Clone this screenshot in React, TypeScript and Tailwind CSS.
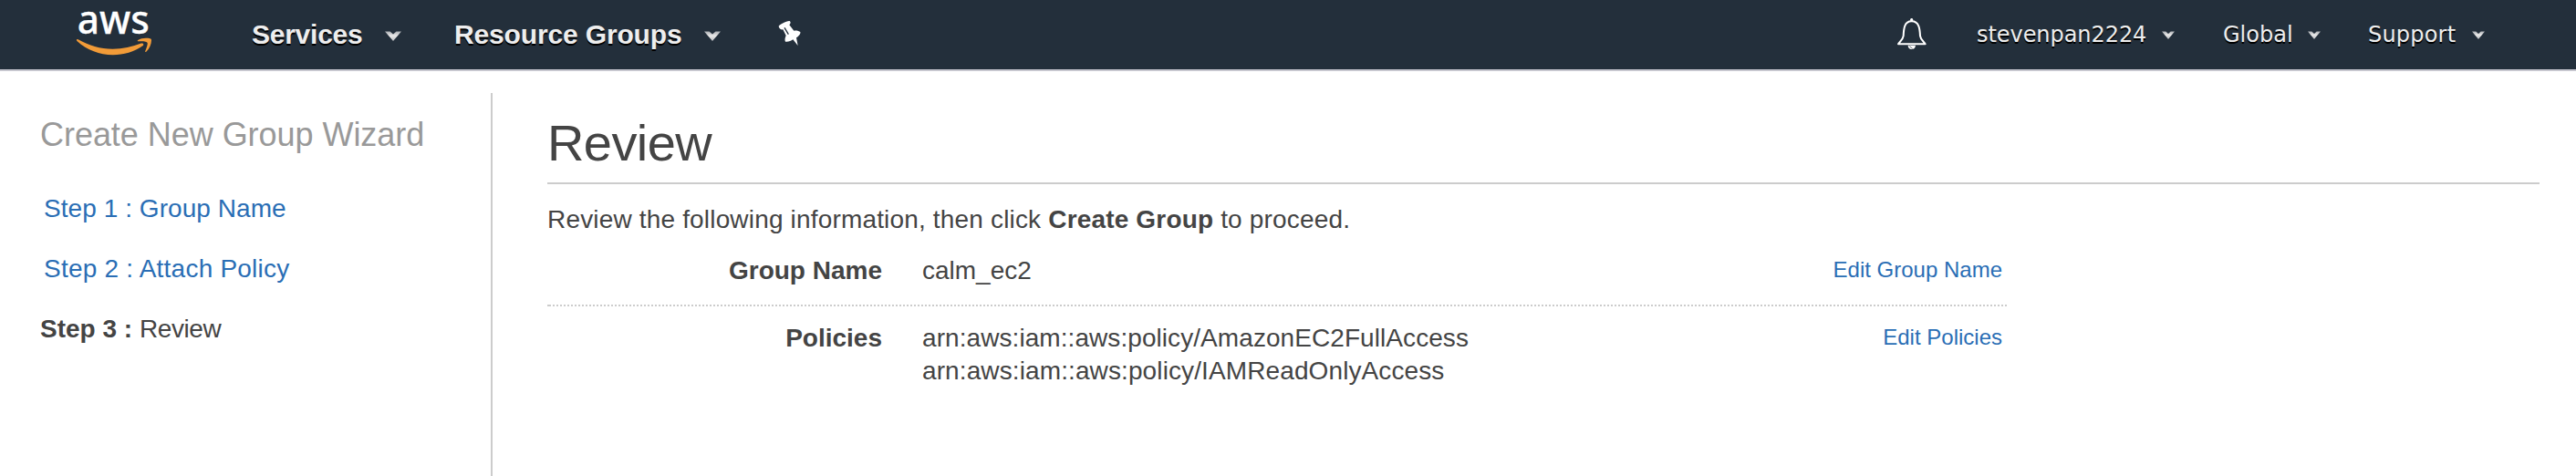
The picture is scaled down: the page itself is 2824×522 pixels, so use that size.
import React from 'react';

function Caret({ large = false }: { large?: boolean }) {
  return (
    <svg
      viewBox="0 0 18 11"
      preserveAspectRatio="none"
      className={large ? 'mt-[2px] h-[11px] w-[18px] shrink-0' : 'h-[9px] w-[14px] shrink-0'}
    >
      <defs>
        <linearGradient id="caret-fill" x1="0" y1="0" x2="0" y2="1">
          <stop offset="0" stopColor="#a9adb2" />
          <stop offset="0.45" stopColor="#e9e9e9" />
          <stop offset="1" stopColor="#b9bcc0" />
        </linearGradient>
      </defs>
      <path d="M0 0.5H5.5L9 3.6L12.5 0.5H18L9 11Z" fill="url(#caret-fill)" />
    </svg>
  );
}

function AwsLogo() {
  return (
    <svg viewBox="78 8 96 60" className="h-[60px] w-[96px] shrink-0 overflow-visible">
      <text
        x="84.8"
        y="36.9"
        textLength="79"
        lengthAdjust="spacingAndGlyphs"
        fill="#fff"
        fontSize="44"
        fontWeight="500"
        stroke="#fff"
        strokeWidth="0.3"
        fontFamily='"Noto Sans", "Open Sans", sans-serif'
      >
        aws
      </text>
      <path
        d="M84 43.6C84.4 42.9 85.2 43 86.2 43.6C97.5 50.2 110 53.7 123.5 53.7C134.5 53.7 145 51.5 154.8 47.6C156.8 46.8 158.4 48.8 156.4 50.3C147.6 56.8 135.3 60.2 123.8 60.2C109 60.2 95.5 54.8 84.7 45.2C84 44.6 83.8 44 84 43.6Z"
        fill="#f29b38"
      />
      <path
        d="M151 45.2C150.5 45 150.6 44.4 151.2 43.9C154.8 41.6 160.5 41.3 164.5 42.2C165.7 42.5 166 43 166 44.3C165.9 48.5 164 53.5 160.3 56.7C159.5 57.3 158.8 57 159.2 56.1C160.3 53.3 162.4 48.3 161.5 46.8C160.5 45.2 154.5 45 151 45.2Z"
        fill="#f29b38"
      />
    </svg>
  );
}

function PinIcon() {
  return (
    <svg viewBox="0 0 150 138" className="h-[46px] w-[50px] shrink-0">
      <path
        d="M26 42C24 37 57 21 62 24C67 27 65 33 61 37L76 56C83 54 92 56 97 60C99 66 92 74 84 79L89 105L73 85C66 90 56 94 48 92C45 87 47 78 50 72L40 52C33 53 28 50 26 42Z"
        fill="#fff"
      />
      <path d="M45 46L58 68" stroke="#232f3b" strokeWidth="4" />
    </svg>
  );
}

function BellIcon() {
  return (
    <svg viewBox="0 9 180 150" className="h-[50px] w-[60px] shrink-0">
      <path d="M65 119H90C90 127 84 132 77 132C70 132 65 127 65 119Z" fill="#fff" />
      <path d="M70 122L80 130" stroke="#232f3b" strokeWidth="2" />
      <circle cx="77" cy="35" r="5" fill="#fff" />
      <path
        d="M33 115C33 110 48 104 50 88C51 66 52 40 77 40C102 40 104 66 105 88C107 104 122 110 122 115Z"
        fill="none"
        stroke="#fff"
        strokeWidth="6"
        strokeLinejoin="round"
      />
    </svg>
  );
}

const shadow = 'whitespace-nowrap text-[#eee] [text-shadow:0_2px_0_#000]';

function Header() {
  return (
    <header className="flex h-[78px] shrink-0 items-center border-b-2 border-[#c8c8d0] bg-[#232f3b] pr-[100px] pl-[78px]">
      <AwsLogo />
      <nav className="flex items-center text-[30px] font-bold">
        <div className="ml-[102px] flex w-[164px] items-center justify-between">
          <span className={`${shadow} pb-[2px] tracking-[-0.25px]`}>Services</span>
          <Caret large />
        </div>
        <div className="ml-[58px] flex w-[292px] items-center justify-between">
          <span className={`${shadow} pb-[2px] tracking-[-0.15px]`}>Resource Groups</span>
          <Caret large />
        </div>
        <div className="ml-[55px]">
          <PinIcon />
        </div>
      </nav>
      <nav className="ml-auto flex items-center font-['Verdana','DejaVu_Sans',sans-serif] text-[24px]">
        <BellIcon />
        <div className="ml-[37px] flex w-[217px] items-center justify-between">
          <span className={`${shadow} tracking-[-0.06px]`}>stevenpan2224</span>
          <Caret />
        </div>
        <div className="ml-[53px] flex w-[107px] items-center justify-between">
          <span className={shadow}>Global</span>
          <Caret />
        </div>
        <div className="ml-[52px] flex w-[128px] items-center justify-between">
          <span className={`${shadow} tracking-[0.2px]`}>Support</span>
          <Caret />
        </div>
      </nav>
    </header>
  );
}

function Sidebar() {
  return (
    <aside className="w-[538px] shrink-0 pt-[24px] pl-[44px]">
      <h2 className="text-[36px] leading-[43px] tracking-[-0.04px] text-[#999]">Create New Group Wizard</h2>
      <ol className="mt-[42px] flex flex-col gap-[31px] text-[28px] leading-[35px]">
        <li className="pl-[4px]">
          <a className="tracking-[0.06px] text-[#2a6eb5]">Step 1 : Group Name</a>
        </li>
        <li className="pl-[4px]">
          <a className="tracking-[0.22px] text-[#2a6eb5]">Step 2 : Attach Policy</a>
        </li>
        <li>
          <b>Step 3 :</b> <span className="tracking-[-0.4px]">Review</span>
        </li>
      </ol>
    </aside>
  );
}

function DottedRule() {
  return (
    <div className="mt-[20px] h-[2px] border-l-2 border-[#ccc] bg-[repeating-linear-gradient(to_right,#ccc_0_2px,transparent_2px_4px)]" />
  );
}

function Row({ label, action, children }: { label: string; action: string; children: React.ReactNode }) {
  return (
    <div className="flex pr-[5px]">
      <div className="w-[367px] shrink-0 text-right font-bold">{label}</div>
      <div className="flex grow flex-col gap-px pl-[44px]">{children}</div>
      <a className="text-[24px] leading-[33px] text-[#2a6eb5]">{action}</a>
    </div>
  );
}

export default function App() {
  return (
    <div className="flex h-[522px] flex-col overflow-hidden bg-white font-['Liberation_Sans',Arial,sans-serif] text-[#444]">
      <Header />
      <div className="flex grow pt-[24px]">
        <Sidebar />
        <main className="grow border-l-2 border-[#ccc] pt-[23px] pr-[40px] pl-[60px] text-[28px] leading-[35px]">
          <h1 className="border-b-2 border-[#ccc] pb-[12px] text-[56px] leading-[63px] tracking-[-0.6px]">
            Review
          </h1>
          <p className="mt-[21px] tracking-[0.17px]">
            Review the following information, then click <b>Create Group</b> to proceed.
          </p>
          <section className="mt-[21px] w-[1600px]">
            <Row label="Group Name" action="Edit Group Name">
              <span>calm_ec2</span>
            </Row>
            <DottedRule />
            <div className="mt-[17px]">
              <Row label="Policies" action="Edit Policies">
                <span className="tracking-[0.07px]">arn:aws:iam::aws:policy/AmazonEC2FullAccess</span>
                <span className="tracking-[0.11px]">arn:aws:iam::aws:policy/IAMReadOnlyAccess</span>
              </Row>
            </div>
          </section>
        </main>
      </div>
    </div>
  );
}
